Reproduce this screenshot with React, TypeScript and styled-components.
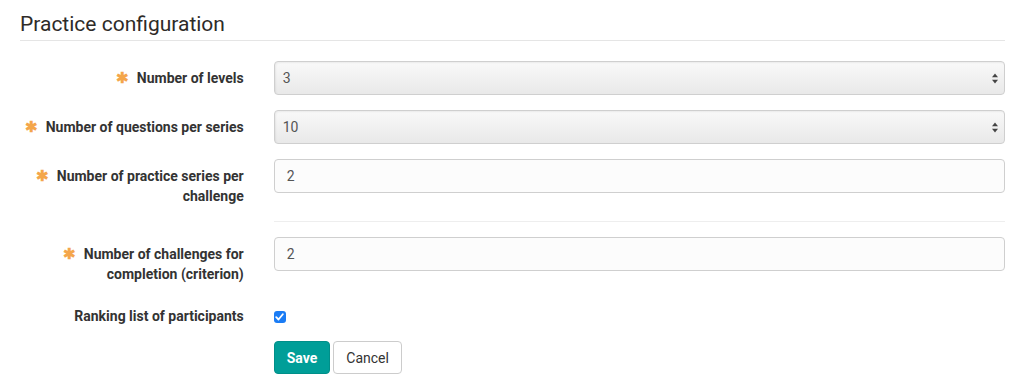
import React from "react";
import styled, { createGlobalStyle } from "styled-components";

const Global = createGlobalStyle`
  html, body { margin: 0; padding: 0; background: #fff; }
  body { font-family: Roboto, "Helvetica Neue", Arial, sans-serif; font-size: 14px; color: #333; }
  * { box-sizing: border-box; }
`;

const Page = styled.div`
  padding: 0 9px 0 20px;
`;

const Title = styled.h2`
  margin: 12px 0 0;
  padding-bottom: 3px;
  font-size: 21px;
  font-weight: 400;
  line-height: 25px;
  color: #2e2b28;
  border-bottom: 1px solid #e5e5e5;
`;

const Form = styled.form`
  margin-top: 20px;
  margin-left: -15px;
  margin-right: -15px;
`;

const Group = styled.div`
  display: flex;
  margin-bottom: 15px;
`;

const Label = styled.label`
  flex: 0 0 25%;
  padding: 7px 15px 0;
  text-align: right;
  font-weight: 700;
  font-size: 14px;
  line-height: 20px;
  color: #333;
`;

const Req = styled.span`
  color: #f4a64b;
  font-size: 15px;
  margin-right: 8px;
  font-weight: 700;
`;

const Field = styled.div`
  flex: 1 1 auto;
  padding: 0 15px;
`;

const SelectBox = styled.div`
  position: relative;
  height: 34px;
  border: 1px solid #cfcfcf;
  border-radius: 4px;
  background: linear-gradient(#f9f9f9, #e9e9e9);
  box-shadow: inset 1px 1px 2px rgba(0, 0, 0, 0.06);
  font-size: 14px;
  color: #555;
  line-height: 32px;
  padding-left: 8px;
`;

const Arrows = styled.svg`
  position: absolute;
  right: 5px;
  top: 11px;
`;

const Input = styled.div`
  height: 34px;
  border: 1px solid #cfcfcf;
  border-radius: 4px;
  background: #fcfcfc;
  font-size: 14px;
  color: #555;
  line-height: 32px;
  padding-left: 12px;
`;

const Sep = styled.hr`
  border: 0;
  border-top: 1px solid #eee;
  margin: 0 0 15px;
`;

const SepRow = styled.div`
  padding-left: calc(25% + 15px);
  padding-right: 15px;
`;

const CheckWrap = styled.div`
  padding-top: 12px;
`;

const Check = styled.span`
  width: 12px;
  height: 12px;
  border-radius: 3px;
  background: #1a7cf5;
  display: flex;
  align-items: center;
  justify-content: center;
`;

const Buttons = styled.div`
  display: flex;
  gap: 3px;
`;

const Button = styled.button<{ $primary?: boolean }>`
  height: 33px;
  border-radius: 4px;
  font-family: Roboto, Arial, sans-serif;
  font-size: 14px;
  padding: 0 12px;
  border: 1px solid ${(p) => (p.$primary ? "#008f89" : "#ccc")};
  background: ${(p) => (p.$primary ? "#009e98" : "#fff")};
  color: ${(p) => (p.$primary ? "#fff" : "#333")};
  font-weight: ${(p) => (p.$primary ? 700 : 400)};
`;

const rows = [
  { label: "Number of levels", value: "3" },
  { label: "Number of questions per series", value: "10" },
];

export default function App() {
  return (
    <Page>
      <Global />
      <Title>Practice configuration</Title>
      <Form>
        {rows.map((r) => (
          <Group key={r.label}>
            <Label>
              <Req>✱</Req>
              {r.label}
            </Label>
            <Field>
              <SelectBox>
                {r.value}
                <Arrows width="8" height="11" viewBox="0 0 8 11">
                  <path d="M4 0.5 L7 4.2 L1 4.2 Z" fill="#444" />
                  <path d="M4 10.5 L7 6.8 L1 6.8 Z" fill="#444" />
                </Arrows>
              </SelectBox>
            </Field>
          </Group>
        ))}
        <Group>
          <Label>
            <Req>✱</Req>
            Number of practice series per challenge
          </Label>
          <Field>
            <Input>2</Input>
          </Field>
        </Group>
        <SepRow>
          <Sep />
        </SepRow>
        <Group>
          <Label>
            <Req>✱</Req>
            Number of challenges for completion (criterion)
          </Label>
          <Field>
            <Input>2</Input>
          </Field>
        </Group>
        <Group>
          <Label>Ranking list of participants</Label>
          <Field>
            <CheckWrap>
              <Check>
                <svg width="9" height="8" viewBox="0 0 9 8">
                  <path d="M1.2 4.2 L3.5 6.5 L7.8 1.3" fill="none" stroke="#fff" strokeWidth="1.8" strokeLinecap="round" strokeLinejoin="round" />
                </svg>
              </Check>
            </CheckWrap>
          </Field>
        </Group>
        <Group>
          <Label />
          <Field>
            <Buttons>
              <Button $primary type="button">Save</Button>
              <Button type="button">Cancel</Button>
            </Buttons>
          </Field>
        </Group>
      </Form>
    </Page>
  );
}
